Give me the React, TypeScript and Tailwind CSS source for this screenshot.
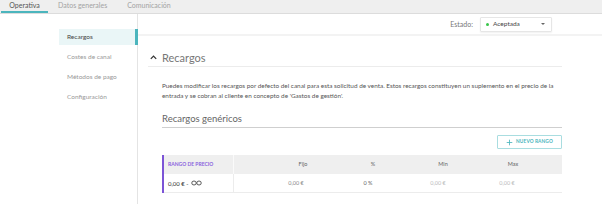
import React from "react";

const font = { fontFamily: "Lato, 'Open Sans', sans-serif" };

const tabs = ["Operativa", "Datos generales", "Comunicación"];
const menu = ["Recargos", "Costes de canal", "Métodos de pago", "Configuración"];

export default function App() {
  return (
    <div className="w-[602px] h-[204px] bg-white overflow-hidden flex flex-col text-[#555]" style={font}>
      {/* Tabs */}
      <div className="h-[14px] shrink-0 bg-[#efefef] border-b border-[#dcdcdc] flex items-end pl-[1px]">
        {tabs.map((t, i) => (
          <div
            key={t}
            className={
              i === 0
                ? "h-[13px] w-[47px] flex items-center justify-center text-[7px] text-[#555] border-b-2 border-[#4bb5bd]"
                : "h-[13px] flex items-center text-[7px] text-[#a3a3a3] ml-[10px] mr-[10px] pb-[2px]"
            }
          >
            {t}
          </div>
        ))}
      </div>

      <div className="flex flex-1">
        {/* Sidebar */}
        <div className="w-[138px] shrink-0 border-r border-[#e4e4e4] pt-[15px] pl-[59px] flex flex-col gap-[4px]">
          {menu.map((m, i) => (
            <div
              key={m}
              className={
                i === 0
                  ? "h-[16px] flex items-center pl-[8px] text-[6.5px] text-[#444] bg-[#eaf6f7] border-r-[3px] border-[#4bb5bd] -mr-[1px]"
                  : "h-[16px] flex items-center pl-[8px] text-[6.5px] text-[#999]"
              }
            >
              {m}
            </div>
          ))}
        </div>

        {/* Main */}
        <div className="flex-1 flex flex-col">
          <div className="h-[22px] shrink-0 border-b-2 border-[#f3f3f3] flex items-center justify-end pr-[50px]">
            <span className="text-[7px] text-[#777] mr-[7px]">Estado:</span>
            <div className="w-[72px] h-[15px] border border-[#e6e6e6] rounded-[1px] shadow-[0_1px_2px_rgba(0,0,0,0.06)] flex items-center pl-[5px] pr-[6px]">
              <span className="w-[3px] h-[3px] rounded-full bg-[#39c54a]" />
              <span className="text-[6.5px] text-[#444] ml-[4px] flex-1">Aceptada</span>
              <span className="w-0 h-0 border-l-[2px] border-r-[2px] border-t-[2px] border-l-transparent border-r-transparent border-t-[#666]" />
            </div>
          </div>

          <div className="pl-[10px] pr-[40px]">
            {/* Section header */}
            <div className="mt-[15px] h-[16px] pb-[2px] border-b border-[#ececec] flex items-center">
              <svg width="9" height="9" viewBox="0 0 10 10" className="ml-[1px] mr-[4px]">
                <path d="M2 6.5 L5 3.5 L8 6.5" fill="none" stroke="#333" strokeWidth="1.4" />
              </svg>
              <span className="text-[11px] text-[#777] leading-none">Recargos</span>
            </div>

            <div className="pl-[14px]">
              <p className="mt-[14px] text-[6.4px] leading-[10px] text-[#555]">
                Puedes modificar los recargos por defecto del canal para esta solicitud de venta. Estos recargos constituyen un suplemento en el precio de la entrada y se cobran al cliente en concepto de 'Gastos de gestión'.
              </p>

              <div className="mt-[12px] h-[15px] border-b border-[#cfcfcf] flex items-start">
                <span className="text-[9.5px] leading-[12px] text-[#666]">Recargos genéricos</span>
              </div>

              <div className="flex justify-end mt-[7px]">
                <button className="w-[65px] h-[14px] border border-[#a9dde0] rounded-[1px] flex items-center justify-center gap-[3px] text-[#4bb5bd]">
                  <svg width="7" height="7" viewBox="0 0 10 10">
                    <path d="M5 1 V9 M1 5 H9" stroke="#4bb5bd" strokeWidth="1.2" />
                  </svg>
                  <span className="text-[4.8px] font-bold tracking-[0.1px]">NUEVO RANGO</span>
                </button>
              </div>

              {/* Table */}
              <div className="mt-[6px] border-l-2 border-[#7c54d6]">
                <div className="h-[19px] bg-[#efefef] flex items-center text-[5.5px] text-[#666]">
                  <div className="w-[70px] h-full flex items-center pl-[4px] font-bold text-[#8a63de] text-[5px] border-r border-[#fafafa]">
                    RANGO DE PRECIO
                  </div>
                  <div className="w-[34px]" />
                  <div className="w-[70px] text-center">Fijo</div>
                  <div className="w-[70px] text-center">%</div>
                  <div className="w-[70px] text-center">Min</div>
                  <div className="w-[70px] text-center">Max</div>
                </div>
                <div className="h-[19px] border-b border-[#ececec] flex items-center text-[5.5px]">
                  <div className="w-[70px] h-full flex items-center pl-[4px] text-[#333] text-[6px] border-r border-[#ececec]">
                    0,00 € -
                    <svg width="11" height="6" viewBox="0 0 22 12" className="ml-[2px]">
                      <ellipse cx="6" cy="6" rx="4.5" ry="4" fill="none" stroke="#333" strokeWidth="1.6" />
                      <ellipse cx="16" cy="6" rx="4.5" ry="4" fill="none" stroke="#333" strokeWidth="1.6" />
                    </svg>
                  </div>
                  <div className="w-[34px]" />
                  <div className="w-[70px] text-center pr-[14px] text-[#888]">0,00 €</div>
                  <div className="w-[70px] text-center pr-[10px] text-[#666]">0 %</div>
                  <div className="w-[70px] text-center pr-[10px] text-[#bbb]">0,00 €</div>
                  <div className="w-[70px] text-center pr-[12px] text-[#bbb]">0,00 €</div>
                </div>
              </div>
            </div>
          </div>
        </div>
      </div>
    </div>
  );
}
